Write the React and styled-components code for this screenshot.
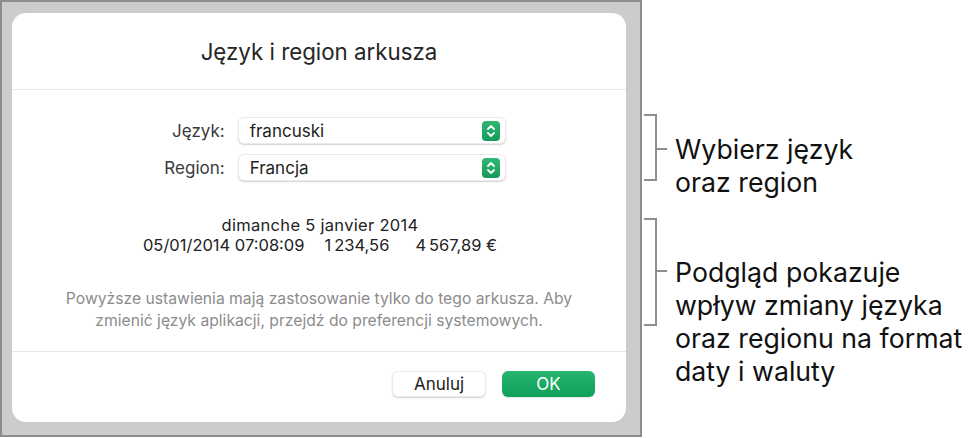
import React from "react";
import styled, { createGlobalStyle } from "styled-components";

const Global = createGlobalStyle`
  html, body { margin: 0; padding: 0; background: #ffffff; }
  body { font-family: Inter, "Noto Sans", sans-serif; color: #1d1d1f; }
`;

const Page = styled.div`
  display: flex;
  align-items: flex-start;
  width: 980px;
  height: 438px;
  background: #fff;
`;

const Frame = styled.div`
  box-sizing: border-box;
  width: 642px;
  height: 437px;
  border: 2px solid #8d8d8d;
  background: #cccccc;
  padding: 11px 14px 13px 10px;
  display: flex;
`;

const Dialog = styled.div`
  flex: 1;
  background: #fff;
  border-radius: 14px;
  display: flex;
  flex-direction: column;
`;

const Header = styled.div`
  height: 77px;
  display: flex;
  align-items: center;
  justify-content: center;
  font-size: 22.3px;
  color: #262626;
  border-bottom: 1px solid #e6e6e6;
  padding-top: 1px;
  box-sizing: border-box;
`;

const Body = styled.div`
  flex: 1;
  display: flex;
  flex-direction: column;
  align-items: center;
  border-bottom: 1px solid #e6e6e6;
`;

const Form = styled.div`
  display: grid;
  grid-template-columns: auto 268px;
  column-gap: 13px;
  row-gap: 10px;
  align-items: center;
  margin-top: 27px;
  margin-left: 32px;
`;

const Label = styled.div`
  font-size: 17px;
  color: #3a3a3a;
  text-align: right;
`;

const Select = styled.div`
  box-sizing: border-box;
  height: 27px;
  border-radius: 6px;
  background: #fff;
  border: 1px solid rgba(0, 0, 0, 0.08);
  box-shadow: 0 1px 1.5px rgba(0, 0, 0, 0.18);
  display: flex;
  align-items: center;
  justify-content: space-between;
  padding: 0 5px 0 11px;
  font-size: 17px;
  color: #222;
`;

const Stepper = styled.div`
  width: 18px;
  height: 20px;
  border-radius: 4px;
  background: linear-gradient(#2fb872, #149a59);
  display: flex;
  align-items: center;
  justify-content: center;
`;

const Preview = styled.div`
  margin-top: 34px;
  text-align: center;
  font-size: 16.5px;
  line-height: 20px;
  color: #222;
  margin-left: 2px;
`;

const PreviewFirst = styled.span`
  letter-spacing: 0.3px;
`;

const Gap = styled.span`
  display: inline-block;
  width: ${(p) => p.w}px;
`;

const Note = styled.div`
  margin-top: 33px;
  text-align: center;
  font-size: 15.7px;
  line-height: 22px;
  color: #8c8c8c;
`;

const Footer = styled.div`
  height: 70px;
  display: flex;
  justify-content: flex-end;
  align-items: flex-start;
  padding: 19px 31px 0 0;
  box-sizing: border-box;
  gap: 16px;
`;

const Button = styled.div`
  box-sizing: border-box;
  width: ${(p) => p.w}px;
  height: 26px;
  border-radius: 6px;
  display: flex;
  align-items: center;
  justify-content: center;
  font-size: 17px;
  background: ${(p) => (p.primary ? "linear-gradient(#25b56d, #0fa05a)" : "#fff")};
  color: ${(p) => (p.primary ? "#fff" : "#222")};
  border: ${(p) => (p.primary ? "none" : "1px solid rgba(0,0,0,0.08)")};
  box-shadow: ${(p) => (p.primary ? "0 1px 1px rgba(0,0,0,0.1)" : "0 1px 1.5px rgba(0,0,0,0.18)")};
`;

const Side = styled.div`
  display: flex;
  flex-direction: column;
  padding-left: 2px;
`;

const Callout = styled.div`
  display: flex;
  align-items: flex-start;
  margin-top: ${(p) => p.top}px;
`;

const Bracket = styled.div`
  position: relative;
  width: 11px;
  height: ${(p) => p.h}px;
  border: 2px solid #8f8f8f;
  border-left: none;
  flex-shrink: 0;
  &::after {
    content: "";
    position: absolute;
    left: 11px;
    top: ${(p) => p.tick}px;
    width: 12px;
    height: 2px;
    background: #8f8f8f;
  }
`;

const CalloutText = styled.div`
  margin-left: 18px;
  margin-top: ${(p) => p.offset}px;
  font-family: Inter, "Noto Sans", sans-serif;
  font-size: 26.7px;
  line-height: 33px;
  color: #111;
`;

const Chevrons = () => (
  <svg width="10" height="14" viewBox="0 0 10 14" fill="none">
    <path d="M2 5 L5 2 L8 5" stroke="#fff" strokeWidth="1.8" strokeLinecap="round" strokeLinejoin="round" />
    <path d="M2 9 L5 12 L8 9" stroke="#fff" strokeWidth="1.8" strokeLinecap="round" strokeLinejoin="round" />
  </svg>
);

export default function App() {
  return (
    <Page>
      <Global />
      <Frame>
        <Dialog>
          <Header>Język i region arkusza</Header>
          <Body>
            <Form>
              <Label>Język:</Label>
              <Select>
                francuski
                <Stepper>
                  <Chevrons />
                </Stepper>
              </Select>
              <Label>Region:</Label>
              <Select>
                Francja
                <Stepper>
                  <Chevrons />
                </Stepper>
              </Select>
            </Form>
            <Preview>
              <PreviewFirst>dimanche 5 janvier 2014</PreviewFirst>
              <br />
              05/01/2014 07:08:09<Gap w={20} />1{"\u202F"}234,56<Gap w={26} />4{"\u202F"}567,89{"\u00A0"}€
            </Preview>
            <Note>
              Powyższe ustawienia mają zastosowanie tylko do tego arkusza. Aby
              <br />
              zmienić język aplikacji, przejdź do preferencji systemowych.
            </Note>
          </Body>
          <Footer>
            <Button w={94}>Anuluj</Button>
            <Button w={93} primary>
              OK
            </Button>
          </Footer>
        </Dialog>
      </Frame>
      <Side>
        <Callout top={114}>
          <Bracket h={63} tick={32} />
          <CalloutText offset={19}>
            Wybierz język
            <br />
            oraz region
          </CalloutText>
        </Callout>
        <Callout top={19}>
          <Bracket h={104} tick={50} />
          <CalloutText offset={38}>
            Podgląd pokazuje
            <br />
            wpływ zmiany języka
            <br />
            oraz regionu na format
            <br />
            daty i waluty
          </CalloutText>
        </Callout>
      </Side>
    </Page>
  );
}
